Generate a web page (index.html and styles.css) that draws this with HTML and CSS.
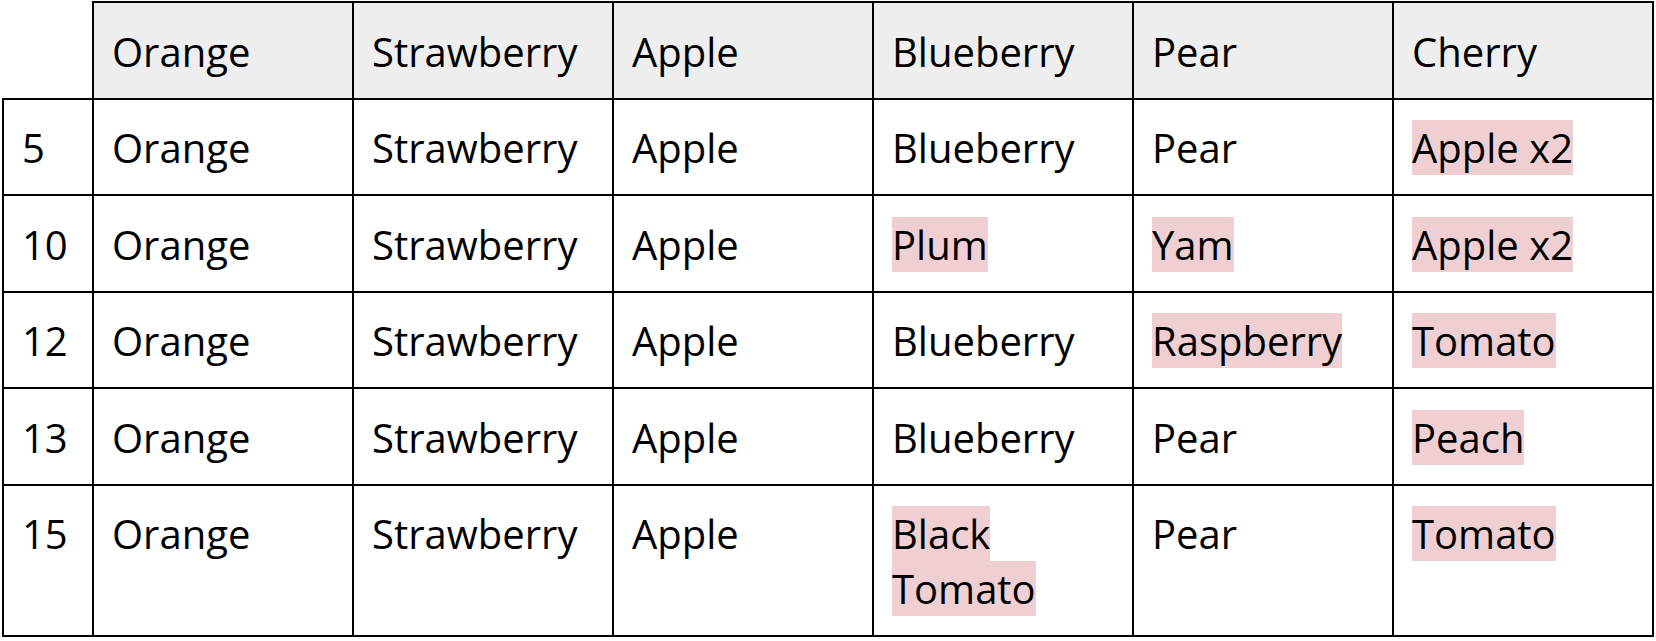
FILE: index.html
```html
<!DOCTYPE html>
<html lang="en">
<head>
<meta charset="utf-8">
<title>Fruit table</title>
<link rel="stylesheet" href="styles.css">
</head>
<body>
<table class="fruit-table">
  <colgroup>
    <col class="col-num">
    <col class="col-fruit">
    <col class="col-fruit">
    <col class="col-fruit">
    <col class="col-fruit">
    <col class="col-fruit">
    <col class="col-fruit">
  </colgroup>
  <thead>
    <tr>
      <th class="corner"></th>
      <th>Orange</th>
      <th>Strawberry</th>
      <th>Apple</th>
      <th>Blueberry</th>
      <th>Pear</th>
      <th>Cherry</th>
    </tr>
  </thead>
  <tbody>
    <tr>
      <td>5</td>
      <td>Orange</td>
      <td>Strawberry</td>
      <td>Apple</td>
      <td>Blueberry</td>
      <td>Pear</td>
      <td><span class="diff">Apple x2</span></td>
    </tr>
    <tr>
      <td>10</td>
      <td>Orange</td>
      <td>Strawberry</td>
      <td>Apple</td>
      <td><span class="diff">Plum</span></td>
      <td><span class="diff">Yam</span></td>
      <td><span class="diff">Apple x2</span></td>
    </tr>
    <tr>
      <td>12</td>
      <td>Orange</td>
      <td>Strawberry</td>
      <td>Apple</td>
      <td>Blueberry</td>
      <td><span class="diff">Raspberry</span></td>
      <td><span class="diff">Tomato</span></td>
    </tr>
    <tr>
      <td>13</td>
      <td>Orange</td>
      <td>Strawberry</td>
      <td>Apple</td>
      <td>Blueberry</td>
      <td>Pear</td>
      <td><span class="diff">Peach</span></td>
    </tr>
    <tr>
      <td>15</td>
      <td>Orange</td>
      <td>Strawberry</td>
      <td>Apple</td>
      <td><span class="diff">Black Tomato</span></td>
      <td>Pear</td>
      <td><span class="diff">Tomato</span></td>
    </tr>
  </tbody>
</table>
</body>
</html>
```

FILE: styles.css
```css
html, body {
  margin: 0;
  padding: 0;
  background: #ffffff;
}

body {
  font-family: "Open Sans", "Noto Sans", sans-serif;
  font-size: 40px;
  line-height: 55px;
  color: #000000;
}

.fruit-table {
  border-collapse: collapse;
  table-layout: fixed;
  width: 1652px;
  margin: 1px 0 0 2px;
}

.col-num {
  width: 90px;
}

.col-fruit {
  width: 260px;
}

.fruit-table th,
.fruit-table td {
  border: 2px solid #000000;
  padding: 20.75px 18px 18.75px 18px;
  text-align: left;
  vertical-align: top;
  font-weight: 400;
}

.fruit-table th {
  background: #eeeeee;
}

.fruit-table th.corner {
  background: transparent;
  border-top: none;
  border-left: none;
}

.diff {
  background: #efcfd1;
}
```
